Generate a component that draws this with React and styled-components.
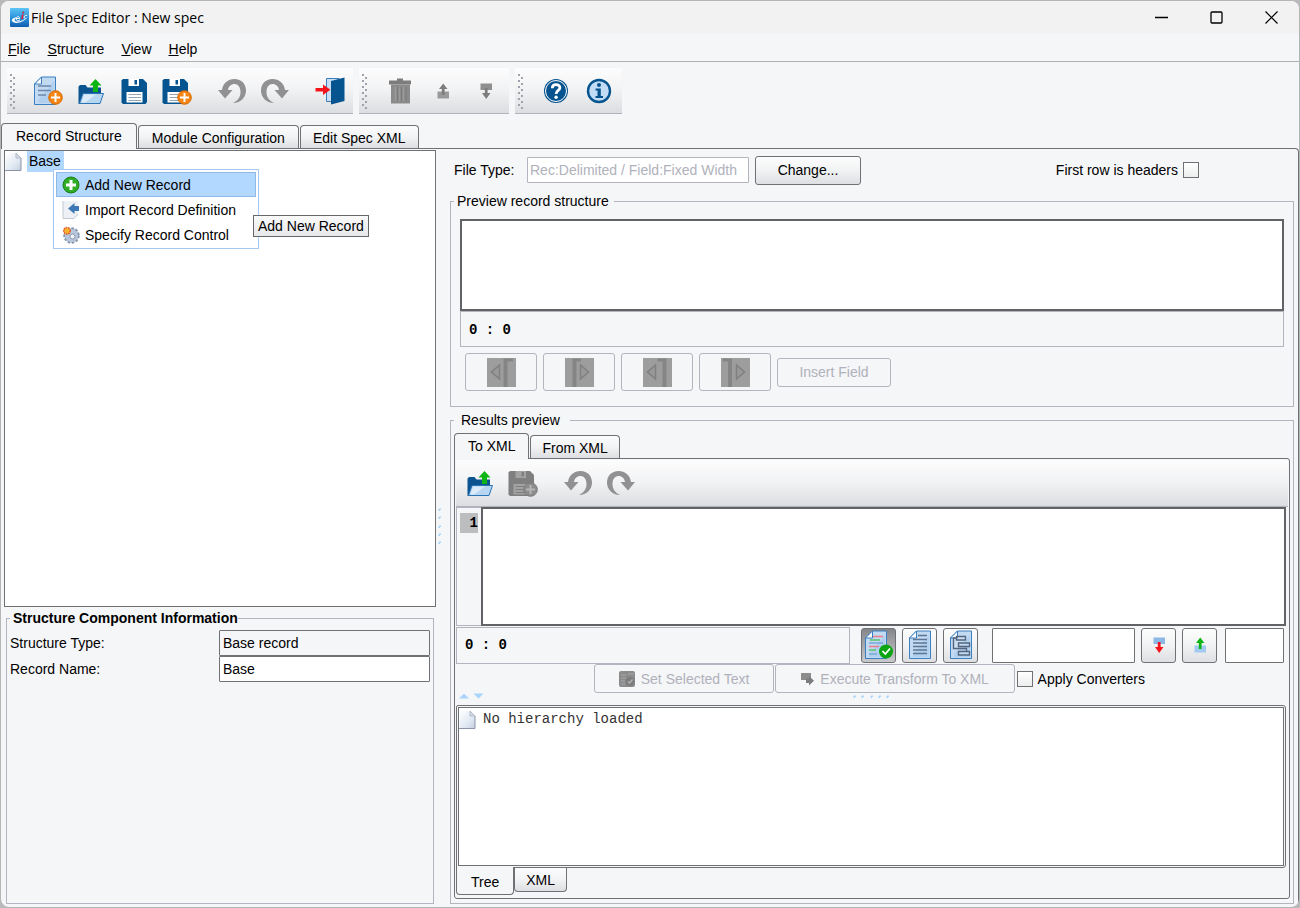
import React from 'react';
import styled, { createGlobalStyle } from 'styled-components';

const GlobalStyle = createGlobalStyle`
  * {
    box-sizing: border-box;
  }
  body {
    margin: 0;
    background: #b9b9bb;
    color: #000;
    font-family: "Liberation Sans", Arial, sans-serif;
    font-size: 14px;
    line-height: 18px;
  }
  button, input, textarea {
    font: inherit;
    color: inherit;
  }
`;

const line = '#707174';
const softLine = '#b3b4be';
const panel = '#f5f6f8';

/* ---------- window frame ---------- */

const Window = styled.div`
  display: flex;
  flex-direction: column;
  height: 100vh;
  min-height: 760px;
  border: 1px solid #b4b5b7;
  border-radius: 9px;
  background: ${panel};
  overflow: hidden;
`;

const TitleBar = styled.header`
  display: flex;
  align-items: center;
  height: 33px;
  padding-left: 9px;
  background: #f2f2f2;
`;

const Title = styled.h1`
  flex: 1;
  margin: 0;
  padding-left: 2px;
  font: 400 14px/20px "Open Sans", "Noto Sans", sans-serif;
`;

const WindowButton = styled.button`
  display: flex;
  align-items: center;
  justify-content: center;
  width: 55px;
  height: 32px;
  padding: 0;
  border: 0;
  background: transparent;
`;

const MenuBar = styled.nav`
  display: flex;
  gap: 17px;
  height: 28px;
  padding: 6px 7px 0;
  border-bottom: 1px solid #b0b1b5;
`;

const MenuLink = styled.a`
  color: inherit;
  text-decoration: none;
`;

/* ---------- toolbars ---------- */

const ToolbarRow = styled.div`
  display: flex;
  gap: 6px;
  padding: 6px 6px 9px;
`;

const Toolbar = styled.div`
  display: flex;
  align-items: center;
  height: ${(props) => (props.$inner ? 47 : 46)}px;
  padding: 0 2px;
  border-bottom: 1px solid #b0b2bc;
  background: linear-gradient(#fdfdfe, #f1f2f3 50%, #dcdde0);
`;

const Grip = styled.span`
  width: 8px;
  height: 36px;
  margin-right: 9px;
  background:
    radial-gradient(circle at 2px 2px, #a0a1ac 1px, transparent 1px) 0 0 / 8px 6px,
    radial-gradient(circle at 5px 5px, #a0a1ac 1px, transparent 1px) 0 0 / 8px 6px;
`;

const ToolButton = styled.button`
  display: flex;
  align-items: center;
  justify-content: center;
  width: 43px;
  height: 44px;
  padding: 0;
  border: 0;
  background: transparent;
`;

const Gap = styled.span`
  width: ${(props) => (props.$small ? 6 : 12)}px;
`;

/* ---------- tabs ---------- */

const Tabs = styled.div`
  display: flex;
  align-items: ${(props) => (props.$bottom ? 'flex-start' : 'flex-end')};
  gap: 1px;
  position: relative;
`;

const Tab = styled.button`
  height: ${(props) => (props.$on ? 26 : 23)}px;
  padding: ${(props) => `${props.$on ? 0 : 1}px ${props.$pad}px ${props.$on ? 1 : 0}px`};
  border: 1px solid ${line};
  border-radius: 4px 4px 0 0;
  border-bottom: 0;
  background: ${(props) => (props.$on ? panel : 'linear-gradient(#fcfcfd, #f2f3f4 50%, #dddee1)')};
  margin-bottom: ${(props) => (props.$on ? -1 : 0)}px;
`;

const BottomTab = styled(Tab)`
  height: ${(props) => (props.$on ? 28 : 24)}px;
  padding-top: ${(props) => (props.$on ? 3 : 1)}px;
  margin: ${(props) => (props.$on ? '-1px -1px 0 0' : 0)};
  border: 1px solid ${line};
  border-top: 0;
  border-radius: 0 0 4px 4px;
`;

/* ---------- panes ---------- */

const Main = styled.main`
  flex: 1;
  min-height: 0;
  display: grid;
  grid-template-columns: 432px 14px minmax(0, 1fr);
  padding: 1px 4px 3px 3px;
  border-top: 1px solid ${line};
  border-right: 1px solid ${line};
  border-radius: 0 4px 0 0;
`;

const Column = styled.div`
  display: flex;
  flex-direction: column;
  min-width: 0;
  min-height: 0;
`;

const TreePane = styled.div`
  position: relative;
  flex: 1;
  border: 1px solid ${line};
  background: #fff;
`;

const TreeNode = styled.div`
  display: flex;
  align-items: center;
  gap: ${(props) => (props.$mono ? 7 : 5)}px;
  line-height: ${(props) => (props.$mono ? 23 : 21)}px;
`;

const NodeLabel = styled.span`
  padding: 0 3px 0 2px;
  background: #b3d8ff;
`;

const ContextMenu = styled.div`
  position: absolute;
  top: 18px;
  left: 48px;
  width: 206px;
  padding: 2px 2px 1px;
  border: 1px solid #a5c9f0;
  background: #fff;
`;

const MenuItem = styled.button`
  display: flex;
  align-items: center;
  gap: 5px;
  width: 100%;
  height: 25px;
  padding: 0 5px;
  border: 1px solid ${(props) => (props.$on ? '#8fb9e6' : 'transparent')};
  background: ${(props) => (props.$on ? '#b3d8ff' : 'transparent')};
  text-align: left;
`;

const Tooltip = styled.div`
  position: absolute;
  top: 64px;
  left: 248px;
  padding: 1px 4px;
  border: 1px solid #66676b;
  background: linear-gradient(#fafafb, #e7e8ea);
  white-space: nowrap;
`;

const Splitter = styled.div`
  display: flex;
  align-items: center;
  justify-content: center;
  padding-right: 7px;
`;

const Group = styled.fieldset`
  display: flex;
  flex-direction: column;
  min-width: 0;
  margin: ${(props) => (props.$flex ? '4px 0 0' : 0)};
  padding: ${(props) => props.$padding};
  border: 1px solid ${softLine};
  flex: ${(props) => props.$flex || 'none'};
`;

const Legend = styled.legend`
  height: 18px;
  margin-left: ${(props) => props.$shift || 0}px;
  padding: ${(props) => props.$padding || '0 5px 0 3px'};
`;

const InfoGroup = styled(Group)`
  height: 295px;
  margin: 2px 2px 0;
`;

const InfoRow = styled.div`
  display: grid;
  grid-template-columns: 209px minmax(0, 1fr);
  align-items: center;
`;

const Field = styled.input`
  min-width: 0;
  height: 26px;
  padding: 0 3px;
  border: 1px solid ${line};
  border-radius: 1px;
  background: #fff;
  outline: 0;
  &:read-only {
    background: ${panel};
  }
  &:disabled {
    width: 222px;
    border: 1px solid ${softLine};
    background: #fff;
    color: #b0b1bb;
    padding: 0 2px;
  }
`;

const Row = styled.div`
  display: flex;
  align-items: center;
`;

const FileRow = styled(Row)`
  height: 30px;
  margin: 5px 0 7px;
  padding: 0 95px 0 4px;
`;

const FileLabel = styled.label`
  width: 73px;
`;

const Button = styled.button`
  display: flex;
  align-items: center;
  justify-content: center;
  gap: 5px;
  height: 29px;
  padding: 0;
  border: 1px solid ${line};
  border-radius: 3px;
  background: linear-gradient(#fdfdfd, #f1f2f3 50%, #dedfe2);
  width: ${(props) => props.$width}px;
  &:disabled {
    border-color: ${softLine};
    background: ${panel};
    color: #b0b1bb;
  }
`;

const IconButton = styled(Button)`
  width: 35px;
  height: 35px;
  ${(props) => props.$on && 'background: linear-gradient(#85868a, #c9cacd);'}
`;

const CheckLabel = styled.label`
  display: flex;
  align-items: center;
  gap: 5px;
  margin-left: ${(props) => (props.$right ? 'auto' : '1px')};
`;

const Check = styled.input`
  appearance: none;
  width: 16px;
  height: 16px;
  margin: 0;
  border: 1px solid ${line};
  background: linear-gradient(#fff, #eceded);
`;

const TextArea = styled.textarea`
  display: block;
  flex: ${(props) => (props.$fill ? 1 : 'none')};
  width: 100%;
  height: ${(props) => props.$height}px;
  min-width: 0;
  margin: 0;
  padding: 4px;
  resize: none;
  border: 2px solid #626366;
  background: #fff;
  outline: 0;
`;

const Status = styled.div`
  height: ${(props) => props.$height}px;
  padding: 9px 8px 0;
  border: 1px solid ${softLine};
  font: bold 14px/18px "Liberation Mono", monospace;
  white-space: pre;
`;

const ViewStatus = styled(Status)`
  flex: 1;
  margin-right: 5px;
  padding-top: 8px;
`;

const FieldButtons = styled(Row)`
  gap: 6px;
  margin: 6px 5px 0;
`;

const BigButton = styled(Button)`
  width: 72px;
  height: 38px;
`;

const Panel = styled.div`
  display: flex;
  flex-direction: column;
  flex: 1;
  min-height: 0;
  padding: 1px;
  border: 1px solid ${line};
  border-radius: 0 3px 3px 3px;
`;

const Editor = styled.div`
  display: flex;
  flex: none;
  height: 119px;
  padding-right: 2px;
`;

const Gutter = styled.div`
  width: 25px;
  padding: 5px 3px 0 3px;
  border: 1px solid ${softLine};
  border-width: 1px 0 1px 1px;
  font: bold 14px/20px "Liberation Mono", monospace;
  text-align: right;
`;

const LineNumber = styled.div`
  background: #bcbdbf;
`;

const ViewRow = styled(Row)`
  gap: 6px;
  height: 38px;
  padding-right: 4px;
`;

const SearchField = styled(Field)`
  width: ${(props) => props.$width}px;
  height: 35px;
  margin-left: ${(props) => (props.$first ? 8 : 2)}px;
`;

const ActionRow = styled(Row)`
  justify-content: flex-end;
  gap: 1px;
  padding-right: 143px;
`;

const SplitBar = styled.div`
  display: grid;
  grid-template-columns: 1fr auto 1fr;
  height: 12px;
  padding: 0 3px;
`;

const Hierarchy = styled.div`
  flex: 1;
  min-height: 0;
  margin-right: 2px;
  padding: 1px;
  border: 1px solid ${line};
  border-radius: 2px 3px 3px 0;
`;

const HierarchyTree = styled.div`
  height: 100%;
  border: 1px solid ${line};
  background: #fff;
  font-family: "Liberation Mono", monospace;
  color: #333;
`;

const ResultTabs = styled(Tabs)`
  height: 29px;
`;

/* ---------- icons ---------- */

const Icon = ({ size = 30, children }) => (
  <svg width={size} height={size} viewBox="0 0 30 30" aria-hidden="true">{children}</svg>
);

const Logo = () => (
  <svg width="19" height="19" viewBox="0 0 19 19" aria-hidden="true">
    <defs>
      <linearGradient id="logoBg" x1="0" y1="0" x2="0" y2="1">
        <stop offset="0" stopColor="#5cc4f5" />
        <stop offset=".5" stopColor="#2e94dc" />
        <stop offset="1" stopColor="#0f5fb0" />
      </linearGradient>
    </defs>
    <rect width="19" height="19" rx="1" fill="url(#logoBg)" />
    <path d="M7 9C2 10 0 13 4 14.500C8 16 15 13 17.500 9C14 12 9 14.500 5.500 13.200C4 12.500 4.500 10.500 7 9Z" fill="#fff" />
    <path d="M6 10.500H9.500C10 8 7 8 6 10.500C6 12.500 8 13 10 12M17 7.500C14 6.500 13 10.500 15.500 10.500" fill="none" stroke="#fff" />
    <path d="M12.800 6.500L12 11" stroke="#e02030" strokeWidth="1.500" />
    <circle cx="13.300" cy="4.500" r="1" fill="#e02030" />
  </svg>
);

const Sheet = ({ rules }) => (
  <>
    <path d="M8.500 1H22.500V28.500H1.500V8Z" fill="#c3daf3" stroke="#3b7fc0" />
    <path d="M5 24L21 5V27H5Z" fill="#a5c8ec" opacity=".6" />
    <path d="M8.500 1V8H1.500Z" fill="#fff" stroke="#3b7fc0" />
    {rules}
  </>
);

const Plus = ({ fill = '#f58410', ring = '#d66c05', cross = '#fff' }) => (
  <>
    <circle cx="22.500" cy="21.500" r="6.800" fill={fill} stroke={ring} />
    <path d="M22.500 17V26M18 21.500H27" stroke={cross} strokeWidth="2" />
  </>
);

const NewIcon = () => (
  <Icon>
    <Sheet rules={<path d="M5 10H18M5 14.500H18M5 19H13" stroke="#6b88aa" strokeWidth="1.400" />} />
    <Plus />
  </Icon>
);

const OpenIcon = () => (
  <Icon>
    <path d="M2.500 10.500L4 9H9.500L11.500 11.500H25V18H10L4 28H2.500Z" fill="#0c5490" />
    <path d="M7 17.500H27.500L24 27.500H3.500Z" fill="#b7d6f2" stroke="#2a74b4" />
    <path d="M8 18.500H20L9 26.500H5.500Z" fill="#dcebf9" />
    <path d="M17 16V9.500H13.500L19.500 3L25.500 9.500H22V16Z" fill="#0cb514" />
  </Icon>
);

const Disk = ({ body, paper, rule }) => (
  <>
    <path d="M2.500 4.500L4 3H24L28 7V26L26.500 28H4L2.500 26.500Z" fill={body} />
    <path d="M9.500 3H20V10H9.500Z" fill={paper} />
    <path d="M15.500 4H18V8.500H15.500Z" fill={body} />
    <path d="M7.500 16H23.500V26.500H7.500Z" fill={paper} />
    <path d="M9.500 18.500H22M9.500 21.500H22M9.500 24.500H22" stroke={rule} />
  </>
);

const SaveIcon = () => (
  <Icon><Disk body="#06548f" paper="#fff" rule="#93a4b3" /></Icon>
);

const SaveAsIcon = () => (
  <Icon>
    <g transform="translate(-2 0)"><Disk body="#06548f" paper="#fff" rule="#93a4b3" /></g>
    <Plus />
  </Icon>
);

const SaveOffIcon = () => (
  <Icon>
    <g transform="translate(-2 0)"><Disk body="#7f7f80" paper="#a3a3a4" rule="#7f7f80" /></g>
    <Plus fill="#8d8d8e" ring="#7a7a7b" cross="#b5b5b6" />
  </Icon>
);

const turn = 'M5 14C6 7 11 3 17.500 3C24.500 3 29 8 29 14.500C29 21 24 27 16 27C21 24.500 23.500 21 23.500 16C23.500 11 21 8 17.500 8C14 8 11.500 10.500 11 14H15.500L8 22.500L1 14Z';

const UndoIcon = () => <Icon><path d={turn} fill="#919193" /></Icon>;

const RedoIcon = () => (
  <Icon><path d={turn} fill="#919193" transform="translate(30 0) scale(-1 1)" /></Icon>
);

const ExitIcon = () => (
  <Icon>
    <path d="M11.500 2.500H24V25.500H11.500Z" fill="#c7def4" stroke="#3b7fb8" />
    <path d="M16 5L29.500 1.500V25L16 28.500Z" fill="#06548f" />
    <path d="M0.500 12H8V8.500L15.500 13.700L8 19V15.500H0.500Z" fill="#f5141c" />
  </Icon>
);

const TrashIcon = () => (
  <Icon>
    <path d="M12 2.500H18V4.500H26V8.500H4V4.500H12Z" fill="#7c7c7d" />
    <path d="M6 8.500H25V27.500H6Z" fill="#8b8b8c" />
    <path d="M10.500 11V25M14.500 11V25M18.500 11V25" stroke="#999a9b" strokeWidth="1.500" />
    <path d="M12.500 11V25M16.500 11V25M21 11V25" stroke="#7a7a7b" />
  </Icon>
);

const MoveUpIcon = ({ box = '#999', arrow = '#7d7d7d' }) => (
  <Icon>
    <path d="M9.500 15.500H21V22.500H9.500Z" fill={box} />
    <path d="M13.800 19V13H11L15.200 7.500L19.500 13H16.600V19Z" fill={arrow} />
  </Icon>
);

const MoveDownIcon = ({ box = '#8f8f8f', arrow = '#7d7d7d' }) => (
  <Icon>
    <path d="M9.500 7.500H21V14H9.500Z" fill={box} />
    <path d="M13.800 12V17H11L15.200 23L19.500 17H16.600V12Z" fill={arrow} />
  </Icon>
);

const HelpIcon = () => (
  <Icon>
    <circle cx="15" cy="15" r="12" fill="#06548f" />
    <circle cx="15" cy="15" r="10.500" fill="none" stroke="#fff" />
    <path d="M11.300 12.200C11.300 7.500 18.900 7.500 18.900 11.800C18.900 14.500 15.100 14.500 15.100 18" fill="none" stroke="#fff" strokeWidth="2.800" />
    <circle cx="15.100" cy="21.300" r="1.700" fill="#fff" />
  </Icon>
);

const InfoIcon = () => (
  <Icon>
    <circle cx="15" cy="15" r="11" fill="#c3dcf5" stroke="#06548f" strokeWidth="2.400" />
    <circle cx="15" cy="9" r="2" fill="#06548f" />
    <path d="M11.500 12.500H16.800V20H19V22H11.500V20H13.500V14.500H11.500Z" fill="#06548f" />
  </Icon>
);

const PageIcon = () => (
  <svg width="17" height="20" viewBox="0 0 17 20" aria-hidden="true">
    <defs>
      <linearGradient id="page" x1="0" y1="0" x2="1" y2="1">
        <stop offset="0" stopColor="#fff" />
        <stop offset=".6" stopColor="#e1e9f3" />
        <stop offset="1" stopColor="#c4cedd" />
      </linearGradient>
    </defs>
    <path d="M0.500 1H11L16 6V18.500H0.500Z" fill="url(#page)" />
    <path d="M0 18.500H16V6L11 1" fill="none" stroke="#8c95a8" />
    <path d="M11 1V6H16Z" fill="#d3dae6" stroke="#b4bccb" />
  </svg>
);

const AddIcon = () => (
  <svg width="18" height="18" viewBox="0 0 18 18" aria-hidden="true">
    <circle cx="9" cy="9" r="8" fill="#2fae25" stroke="#1b7d17" />
    <path d="M9 4V14M4 9H14" stroke="#fff" strokeWidth="3" />
  </svg>
);

const ImportIcon = () => (
  <svg width="18" height="18" viewBox="0 0 18 18" aria-hidden="true">
    <path d="M1 0H16V13L12 18H1Z" fill="#edf0f4" />
    <path d="M1 0V17.500H12L16 13" fill="none" stroke="#c3c9d2" />
    <path d="M6 7.500L12.500 2V5H17V10H12.500V13Z" fill="#3f79b5" />
  </svg>
);

const GearIcon = () => (
  <svg width="18" height="18" viewBox="0 0 18 18" aria-hidden="true">
    <circle cx="9.500" cy="9.500" r="7.200" fill="#b9c7da" stroke="#8594ad" strokeWidth="2" strokeDasharray="2.600 1.600" />
    <circle cx="9.500" cy="9.500" r="6.300" fill="#b9c7da" />
    <circle cx="10.500" cy="10.500" r="2.500" fill="#f2f5f9" stroke="#8797b0" />
    <circle cx="5" cy="4.800" r="3.300" fill="#f7b32b" stroke="#e2582c" strokeWidth="1.500" strokeDasharray="1.500 .8" />
  </svg>
);

const ColorViewIcon = () => (
  <Icon>
    <Sheet rules={(
      <>
        <path d="M9 6.500H19M5 16.500H15" stroke="#e8808c" strokeWidth="1.500" />
        <path d="M6 10H16M5 20H12" stroke="#59c46a" strokeWidth="1.500" />
        <path d="M5 13H19M5 24H13" stroke="#7ba7d8" strokeWidth="1.500" />
      </>
    )} />
    <circle cx="22" cy="21.500" r="7" fill="#0ba514" />
    <path d="M18.500 21L21.300 24L26 18.500" fill="none" stroke="#fff" strokeWidth="1.800" />
  </Icon>
);

const PlainViewIcon = () => (
  <Icon>
    <g transform="translate(3 0)">
      <Sheet rules={<path d="M10 5.500H19M5 9.500H19M5 13H19M5 16.500H19M5 20H19M5 23.500H19" stroke="#5d7590" strokeWidth="1.400" />} />
    </g>
  </Icon>
);

const TreeViewIcon = () => (
  <Icon>
    <g transform="translate(3 0)">
      <Sheet rules={(
        <path
          d="M7.500 6.500H16.500V10H7.500ZM9.500 13H20.500V16.500H9.500ZM9.500 21.500H20.500V25H9.500ZM7.500 8H4.500V18.500H17.500V21.500"
          fill="#d5e4f4"
          fillOpacity=".5"
          stroke="#53667d"
          strokeWidth="1.400"
        />
      )} />
    </g>
  </Icon>
);

// bar and arrow of the field boundary buttons
const EdgeIcon = ({ side, dir }) => {
  const arrow = dir === 'left' ? 'M12.500 7V21L4.500 14Z' : 'M15.500 7V21L23.500 14Z';
  const bars = {
    leftLeft: 'M16.500 29V0.500H26V3.500H20.500V29Z',
    rightLeft: 'M7.500 29V0.500H16V3.500H11.500V29Z',
    leftRight: 'M19.500 29V3.500H14.500V0.500H23.500V29Z',
    rightRight: 'M7 29V3.500H2V0.500H11V29Z',
  };
  return (
    <svg width="29" height="29" viewBox="0 0 29 29" aria-hidden="true">
      <rect width="29" height="29" fill="#9d9d9e" />
      <path d={bars[dir + side]} fill="#858586" />
      <path d={arrow} fill="#989899" stroke="#808081" strokeWidth="1.500" />
    </svg>
  );
};

const SelectedTextIcon = () => (
  <svg width="18" height="18" viewBox="0 0 18 18" aria-hidden="true">
    <rect x="1" y="1" width="16" height="16" rx="2" fill="#8b8b8c" />
    <path d="M3 5H8M3 8H8M3 11H7M3 14H7M10 4H16" stroke="#a9a9aa" />
    <circle cx="12" cy="11.500" r="4.500" fill="#7d7d7e" />
    <path d="M10 11.500L11.500 13L14.500 9.500" fill="none" stroke="#b5b5b6" strokeWidth="1.300" />
  </svg>
);

const ExecuteIcon = () => (
  <svg width="15" height="15" viewBox="0 0 15 15" aria-hidden="true">
    <rect x="1" y="2" width="10" height="7" fill="#8c8c8d" />
    <path d="M6 7.500H9V5L14 9.800L9 14.500V12H6Z" fill="#7c7c7d" />
  </svg>
);

const DotsDown = () => (
  <svg width="4" height="38" viewBox="0 0 4 38" aria-hidden="true">
    <path d="M1 1H3L1 3ZM1 9H3L1 11ZM1 18H3L1 20ZM1 26H3L1 28ZM1 34H3L1 36Z" fill="#a9d4fb" stroke="#a9d4fb" />
  </svg>
);

const DotsAcross = () => (
  <svg width="38" height="6" viewBox="0 0 38 6" aria-hidden="true">
    <path d="M1 3H3L1 5ZM9 3H11L9 5ZM18 3H20L18 5ZM26 3H28L26 5ZM34 3H36L34 5Z" fill="#a9d4fb" stroke="#a9d4fb" />
  </svg>
);

const Chevrons = () => (
  <svg width="26" height="6" viewBox="0 0 26 6" aria-hidden="true">
    <path d="M0 5.500L5 0.500L10 5.500ZM14.500 0.500H24.500L19.500 5.500Z" fill="#a9d4fb" />
  </svg>
);

/* ---------- sections ---------- */

const Tool = ({ name, icon, off }) => (
  <ToolButton type="button" aria-label={name} disabled={off}>{icon}</ToolButton>
);

const Header = () => (
  <>
    <TitleBar>
      <Logo />
      <Title>File Spec Editor : New spec</Title>
      <WindowButton type="button" aria-label="Minimize">
        <svg width="13" height="13" viewBox="0 0 13 13"><path d="M0 6.500H13" stroke="#000" strokeWidth="1.300" /></svg>
      </WindowButton>
      <WindowButton type="button" aria-label="Maximize">
        <svg width="13" height="13" viewBox="0 0 13 13"><rect x="1" y="1" width="11" height="11" rx="1" fill="none" stroke="#000" strokeWidth="1.300" /></svg>
      </WindowButton>
      <WindowButton type="button" aria-label="Close">
        <svg width="13" height="13" viewBox="0 0 13 13"><path d="M.5 .5L12.500 12.500M12.500 .5L.5 12.500" stroke="#000" strokeWidth="1.200" /></svg>
      </WindowButton>
    </TitleBar>
    <MenuBar>
      {['File', 'Structure', 'View', 'Help'].map((item) => (
        <div key={item}>
          <MenuLink href="#"><u>{item[0]}</u>{item.slice(1)}</MenuLink>
        </div>
      ))}
    </MenuBar>
    <ToolbarRow>
      <Toolbar>
        <Grip />
        <Tool name="New" icon={<NewIcon />} />
        <Tool name="Open" icon={<OpenIcon />} />
        <Tool name="Save" icon={<SaveIcon />} />
        <Tool name="Save as" icon={<SaveAsIcon />} />
        <Gap />
        <Tool name="Undo" icon={<UndoIcon />} off />
        <Tool name="Redo" icon={<RedoIcon />} off />
        <Gap />
        <Tool name="Exit" icon={<ExitIcon />} />
      </Toolbar>
      <Toolbar>
        <Grip />
        <Tool name="Delete" icon={<TrashIcon />} off />
        <Tool name="Move up" icon={<MoveUpIcon />} off />
        <Tool name="Move down" icon={<MoveDownIcon />} off />
      </Toolbar>
      <Toolbar>
        <Grip />
        <Tool name="Help" icon={<HelpIcon />} />
        <Tool name="About" icon={<InfoIcon />} />
      </Toolbar>
    </ToolbarRow>
  </>
);

const Structure = () => (
  <Column>
    <TreePane>
      <TreeNode><PageIcon /><NodeLabel>Base</NodeLabel></TreeNode>
      <ContextMenu>
        <MenuItem type="button" $on><AddIcon />Add New Record</MenuItem>
        <MenuItem type="button"><ImportIcon />Import Record Definition</MenuItem>
        <MenuItem type="button"><GearIcon />Specify Record Control</MenuItem>
      </ContextMenu>
      <Tooltip role="tooltip">Add New Record</Tooltip>
    </TreePane>
    <InfoGroup $padding="3px 3px">
      <Legend $padding="0 0 0 3px"><b>Structure Component Information</b></Legend>
      <InfoRow>
        <label htmlFor="type">Structure Type:</label>
        <Field id="type" defaultValue="Base record" readOnly />
      </InfoRow>
      <InfoRow>
        <label htmlFor="name">Record Name:</label>
        <Field id="name" defaultValue="Base" />
      </InfoRow>
    </InfoGroup>
  </Column>
);

const Preview = () => (
  <Group $padding="9px 9px 15px">
    <Legend $shift={-6}>Preview record structure</Legend>
    <TextArea aria-label="Record structure" $height={92} />
    <Status $height={36}>0 : 0</Status>
    <FieldButtons>
      <BigButton type="button" aria-label="Move start left" disabled><EdgeIcon dir="left" side="Left" /></BigButton>
      <BigButton type="button" aria-label="Move start right" disabled><EdgeIcon dir="right" side="Left" /></BigButton>
      <BigButton type="button" aria-label="Move end left" disabled><EdgeIcon dir="left" side="Right" /></BigButton>
      <BigButton type="button" aria-label="Move end right" disabled><EdgeIcon dir="right" side="Right" /></BigButton>
      <Button type="button" $width={114} disabled>Insert Field</Button>
    </FieldButtons>
  </Group>
);

const Results = () => (
  <Group $padding="4px 3px" $flex="1">
    <Legend $padding="0 10px 0 7px">Results preview</Legend>
    <Tabs>
      <Tab type="button" $on $pad={13}>To XML</Tab>
      <Tab type="button" $pad={11}>From XML</Tab>
    </Tabs>
    <Panel>
      <Toolbar $inner>
        <Tool name="Open" icon={<OpenIcon />} />
        <Tool name="Save as" icon={<SaveOffIcon />} off />
        <Gap />
        <Tool name="Undo" icon={<UndoIcon />} off />
        <Tool name="Redo" icon={<RedoIcon />} off />
      </Toolbar>
      <Editor>
        <Gutter><LineNumber>1</LineNumber></Gutter>
        <TextArea aria-label="Sample text" $height={119} $fill />
      </Editor>
      <ViewRow>
        <ViewStatus $height={37}>0 : 0</ViewStatus>
        <IconButton type="button" aria-label="Colour view" $on><ColorViewIcon /></IconButton>
        <IconButton type="button" aria-label="Plain view"><PlainViewIcon /></IconButton>
        <IconButton type="button" aria-label="Tree view"><TreeViewIcon /></IconButton>
        <SearchField aria-label="Search" $width={143} $first />
        <IconButton type="button" aria-label="Find next"><MoveDownIcon box="#8bb8e6" arrow="#f5141c" /></IconButton>
        <IconButton type="button" aria-label="Find previous"><MoveUpIcon box="#a3caf0" arrow="#0cb514" /></IconButton>
        <SearchField aria-label="Go to line" $width={59} />
      </ViewRow>
      <ActionRow>
        <Button type="button" $width={180} disabled><SelectedTextIcon />Set Selected Text</Button>
        <Button type="button" $width={240} disabled><ExecuteIcon />Execute Transform To XML</Button>
        <CheckLabel><Check type="checkbox" />Apply Converters</CheckLabel>
      </ActionRow>
      <SplitBar><Chevrons /><DotsAcross /></SplitBar>
      <Hierarchy>
        <HierarchyTree>
          <TreeNode $mono><PageIcon />No hierarchy loaded</TreeNode>
        </HierarchyTree>
      </Hierarchy>
      <ResultTabs $bottom>
        <BottomTab type="button" $on $pad={14}>Tree</BottomTab>
        <BottomTab type="button" $pad={11}>XML</BottomTab>
      </ResultTabs>
    </Panel>
  </Group>
);

export default function App() {
  return (
    <>
      <GlobalStyle />
      <Window>
        <Header />
        <Tabs>
          <Tab type="button" $on $pad={14}>Record Structure</Tab>
          <Tab type="button" $pad={13}>Module Configuration</Tab>
          <Tab type="button" $pad={12}>Edit Spec XML</Tab>
        </Tabs>
        <Main>
          <Structure />
          <Splitter><DotsDown /></Splitter>
          <Column>
            <FileRow>
              <FileLabel htmlFor="fileType">File Type:</FileLabel>
              <Field id="fileType" defaultValue="Rec:Delimited / Field:Fixed Width" disabled />
              <Gap $small />
              <Button type="button" $width={106}>Change...</Button>
              <CheckLabel $right>First row is headers<Check type="checkbox" /></CheckLabel>
            </FileRow>
            <Preview />
            <Results />
          </Column>
        </Main>
      </Window>
    </>
  );
}
